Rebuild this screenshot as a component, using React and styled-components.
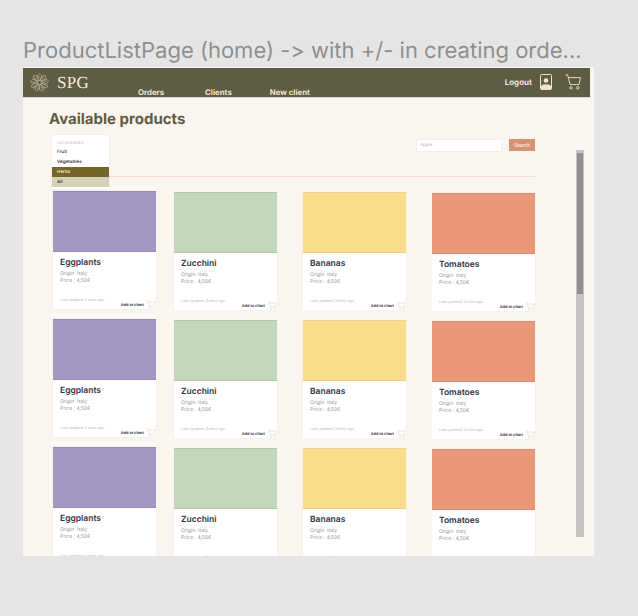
import React from "react"
import styled, { createGlobalStyle } from "styled-components"

const GlobalStyle = createGlobalStyle`
  html, body {
    margin: 0;
    background: #e5e5e5;
    font-family: Inter, "Liberation Sans", sans-serif;
    text-rendering: geometricPrecision;
    font-variant-ligatures: none;
    font-feature-settings: "calt" 0;
  }
`

const Page = styled.div`
  width: 638px;
  height: 616px;
  padding: 39px 0 0 23px;
  box-sizing: border-box;
  overflow: hidden;
`
const FrameName = styled.div`
  font-size: 22px;
  line-height: 25px;
  color: #8f8f8f;
  white-space: nowrap;
  margin-bottom: 3px;
`
const Frame = styled.div`
  position: relative;
  width: 571px;
  height: 489px;
  padding-top: 1px;
  box-sizing: border-box;
  background: #faf5ef;
  overflow: hidden;
`
const Header = styled.header`
  display: flex;
  width: 567px;
  height: 29px;
  background: #5f5c44;
  box-shadow: 0 1px 1px rgba(0, 0, 0, 0.12);
`
const Brand = styled.div`
  display: flex;
  align-items: center;
  gap: 8px;
  width: 115px;
  padding-left: 7px;
  box-sizing: border-box;
`
const BrandName = styled.span`
  font-family: "Liberation Serif", serif;
  font-size: 17px;
  color: #f6eddf;
  letter-spacing: 0.3px;
`
const Nav = styled.nav`
  display: flex;
  flex: 1;
  align-items: flex-end;
`
const NavLink = styled.a`
  font-size: 7.8px;
  font-weight: 700;
  line-height: 10px;
  color: #eee3d2;
  margin-right: ${(p) => p.$space}px;
`
const UserArea = styled.div`
  display: flex;
  align-items: center;
  padding: 0 9px 2px 0;
`
const Logout = styled.span`
  font-size: 8px;
  font-weight: 700;
  color: #eee3d2;
  margin-right: 8px;
`
const Avatar = styled.svg`
  width: 12px;
  height: 16px;
  margin-right: 13px;
`
const HeaderCart = styled.svg`
  width: 16px;
  height: 16px;
`
const Heading = styled.h1`
  margin: 13px 0 0 26px;
  font-size: 15px;
  line-height: 17px;
  font-weight: 700;
  color: #5f5c44;
`
const Toolbar = styled.div`
  position: relative;
  display: flex;
  justify-content: flex-end;
  align-items: flex-start;
  height: 42px;
  margin: 8px 59px 0 29px;
  padding-top: 5px;
  box-sizing: border-box;
  border-bottom: 1px solid #f5dccb;
`
const CategoryMenu = styled.ul`
  position: absolute;
  top: 0;
  left: 0;
  width: 57px;
  margin: 0;
  padding: 2px 0;
  list-style: none;
  background: #fff;
  box-shadow: 0 0 1px rgba(0, 0, 0, 0.12);
  z-index: 1;
`
const CategoryTitle = styled.li`
  height: 10px;
  padding-left: 5px;
  font-size: 3.5px;
  line-height: 12px;
  letter-spacing: 0.2px;
  color: #a9aab4;
`
const CategoryItem = styled.li`
  height: 10px;
  padding-left: 5px;
  font-size: 4.6px;
  line-height: 11px;
  font-weight: 500;
  color: ${(p) => (p.$active ? "#f6eddf" : "#2b2b2b")};
  background: ${(p) => p.$bg || "transparent"};
`
const SearchInput = styled.div`
  width: 84px;
  height: 11px;
  margin-right: 8px;
  padding-left: 3px;
  box-sizing: border-box;
  background: #fff;
  box-shadow: 0 0 1px rgba(0, 0, 0, 0.2);
  font-size: 4.5px;
  line-height: 11px;
  color: #b3b6c0;
`
const SearchButton = styled.button`
  width: 26px;
  height: 12px;
  margin-top: -1px;
  padding: 0;
  border: 0;
  background: #d49473;
  color: #f8ecdf;
  font-family: inherit;
  font-size: 4.5px;
  font-weight: 600;
`
const Grid = styled.div`
  display: flex;
  padding: 13px 0 0 30px;
`
const Column = styled.div`
  display: flex;
  flex-direction: column;
  gap: 9.75px;
  width: 103px;
  margin-top: ${(p) => p.$top}px;
  margin-right: ${(p) => p.$space}px;
`
const Card = styled.article`
  display: flex;
  flex-direction: column;
  flex-shrink: 0;
  height: 118px;
  background: #fff;
  box-shadow: 0 0 1px rgba(0, 0, 0, 0.08);
`
const Swatch = styled.div`
  height: 61px;
  flex-shrink: 0;
  background: ${(p) => p.$color};
  border-top: 1px solid ${(p) => p.$edge};
  border-bottom: 1px solid ${(p) => p.$edge};
  box-sizing: border-box;
`
const CardBody = styled.div`
  position: relative;
  flex: 1;
  padding: 5px 7px 0;
`
const Name = styled.h2`
  margin: 0 0 2px;
  font-size: 8.5px;
  line-height: 12px;
  font-weight: 600;
  color: #2d3442;
`
const Meta = styled.div`
  font-size: 5px;
  line-height: 7px;
  color: #96979f;
`
const Updated = styled.div`
  margin-top: 12px;
  font-size: 3.8px;
  line-height: 6px;
  color: #b8b9c0;
`
const AddRow = styled.div`
  position: absolute;
  right: 0;
  bottom: 0;
  display: flex;
  align-items: center;
  gap: 2px;
`
const AddLabel = styled.span`
  font-size: 3.9px;
  font-weight: 600;
  color: #1c1c1c;
`
const AddCart = styled.svg`
  width: 10px;
  height: 9px;
`
const Track = styled.div`
  position: absolute;
  top: 83px;
  left: 553px;
  width: 8px;
  height: 387px;
  padding: 3px 1px 0;
  box-sizing: border-box;
  background: #c4c4c4;
`
const Thumb = styled.div`
  height: 141px;
  background: #8f8f8f;
`

const LogoMark = () => (
  <svg width="19" height="19" viewBox="0 0 20 20" fill="none" stroke="#e6dccb" strokeWidth="0.45">
    <circle cx="10" cy="10" r="2.2" />
    {[0, 40, 80, 120, 160, 200, 240, 280, 320].map((a) => (
      <g key={a} transform={`rotate(${a} 10 10)`}>
        <path d="M10 7.8C6.8 6 6.8 2 10 .4 13.2 2 13.2 6 10 7.8Z" />
        <path d="M10 5.6C9 4.6 9 3.2 10 2.2" />
      </g>
    ))}
  </svg>
)

const CartPath = ({ color, width }) => (
  <g fill="none" stroke={color} strokeWidth={width}>
    <path d="M.5 .8H2.6L5 10.6H14L15.5 3.6H3.4" />
    <circle cx="6" cy="13.8" r="1.2" />
    <circle cx="12.8" cy="13.8" r="1.2" />
  </g>
)

const products = [
  { name: "Eggplants", color: "#a498c2", edge: "#9488b6", top: 1, space: 18 },
  { name: "Zucchini", color: "#c3d7bb", edge: "#b6c4ae", top: 2, space: 26 },
  { name: "Bananas", color: "#f9dd88", edge: "#e6d295", top: 2, space: 26 },
  { name: "Tomatoes", color: "#ea9678", edge: "#d98a70", top: 3, space: 0 },
]

const ProductCard = ({ product }) => (
  <Card>
    <Swatch $color={product.color} $edge={product.edge} />
    <CardBody>
      <Name>{product.name}</Name>
      <Meta>Origin: Italy</Meta>
      <Meta>Price : 4,50€</Meta>
      <Updated>Last updated 3 mins ago</Updated>
      <AddRow>
        <AddLabel>Add to chart</AddLabel>
        <AddCart viewBox="0 0 16 16">
          <CartPath color="#eed9c0" width="1.3" />
        </AddCart>
      </AddRow>
    </CardBody>
  </Card>
)

const App = () => (
  <Page>
    <GlobalStyle />
    <FrameName>ProductListPage (home) -&gt; with +/- in creating orde...</FrameName>
    <Frame>
      <Header>
        <Brand>
          <LogoMark />
          <BrandName>SPG</BrandName>
        </Brand>
        <Nav>
          <NavLink $space={41}>Orders</NavLink>
          <NavLink $space={38}>Clients</NavLink>
          <NavLink $space={0}>New client</NavLink>
        </Nav>
        <UserArea>
          <Logout>Logout</Logout>
          <Avatar viewBox="0 0 12 16">
            <rect x="0.5" y="0.5" width="11" height="15" rx="1" fill="none" stroke="#eee3d2" />
            <circle cx="6" cy="6.5" r="2.3" fill="#eee3d2" />
            <path d="M1 15.5V12.5C1 11 3 10.2 6 10.2S11 11 11 12.5V15.5Z" fill="#eee3d2" />
          </Avatar>
          <HeaderCart viewBox="0 0 16 16">
            <CartPath color="#eee3d2" width="0.9" />
          </HeaderCart>
        </UserArea>
      </Header>
      <Heading>Available products</Heading>
      <Toolbar>
        <CategoryMenu>
          <CategoryTitle>CATHEGORIES</CategoryTitle>
          <CategoryItem>Fruit</CategoryItem>
          <CategoryItem>Vegetables</CategoryItem>
          <CategoryItem $active $bg="#766528">Herbs</CategoryItem>
          <CategoryItem $bg="#d6d1b9">All</CategoryItem>
        </CategoryMenu>
        <SearchInput>Apple</SearchInput>
        <SearchButton>Search</SearchButton>
      </Toolbar>
      <Grid>
        {products.map((product) => (
          <Column key={product.name} $top={product.top} $space={product.space}>
            <ProductCard product={product} />
            <ProductCard product={product} />
            <ProductCard product={product} />
          </Column>
        ))}
      </Grid>
      <Track>
        <Thumb />
      </Track>
    </Frame>
  </Page>
)

export default App
